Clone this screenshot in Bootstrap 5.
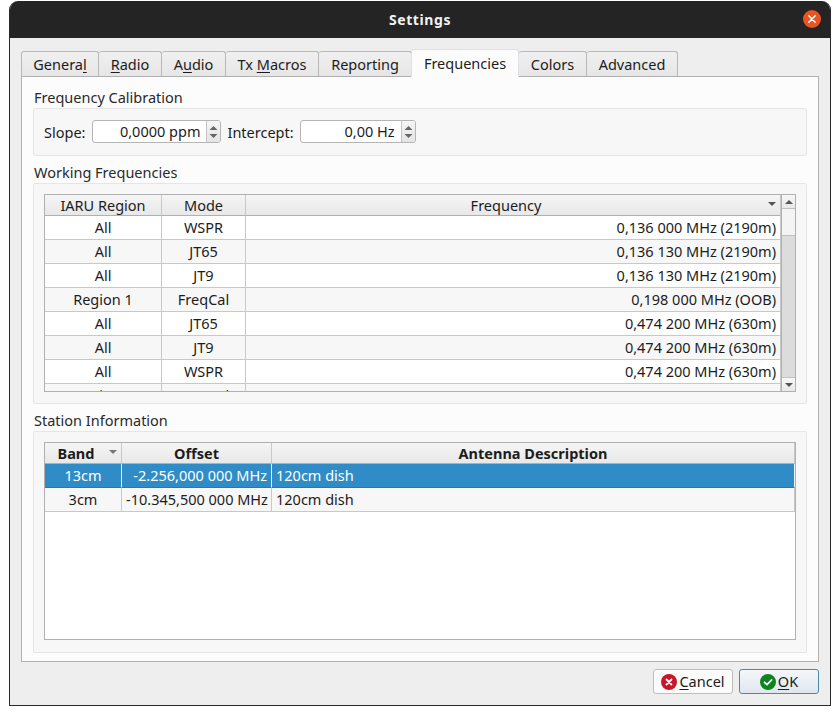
<!DOCTYPE html>
<html lang="en">
<head>
<meta charset="utf-8">
<title>Settings</title>
<link href="https://cdn.jsdelivr.net/npm/bootstrap@5.3.0/dist/css/bootstrap.min.css" rel="stylesheet">
<style>
html,body{background:#fff;margin:0;height:100%}
body{font-family:"Noto Sans","Open Sans",sans-serif;font-size:14.5px;line-height:20px;color:#1c1c1c;overflow:hidden}
.win{width:822px;height:705px;margin:1px 0 0 9px;background:#eee;border:solid #2a2a2a;border-width:0 1px 1px;border-radius:9px 9px 0 0;overflow:hidden;display:flex;flex-direction:column}
.tbar{height:37px;flex:none;background:#242424;color:#f2f2f2;font-weight:700;font-size:14px;letter-spacing:.6px;position:relative;display:flex;align-items:center;justify-content:center}
.xbtn{position:absolute;right:9px;top:9px;width:18px;height:18px}
.tabwrap{padding:11px 11px 0;flex:none;position:relative;z-index:2}
.qtabs{border:0;height:27px;align-items:flex-end;flex-wrap:nowrap}
.qtabs .nav-link{height:25px;padding:0 0 1px;border:1px solid #b8b8b8;border-bottom:0;border-left-width:0;border-radius:3px 3px 0 0;background:linear-gradient(#f0f0f0,#e6e6e6);color:#1c1c1c;display:flex;align-items:center;justify-content:center;margin:0;white-space:pre}
.qtabs .nav-item:first-child .nav-link{border-left-width:1px}
.qtabs .nav-link.active{height:28px;padding:0 0 2px;background:#fcfcfc;color:#1c1c1c;border-left-width:1px;margin:0 0 -1px -1px}
.pane{margin:0 11px;height:586px;flex:none;background:#fcfcfc;border:1px solid #b0b0b0;padding:11px 11px 0}
.gtitle{height:20px;line-height:18px;color:#2a2a2a;padding-left:1px}
.gbox{background:#f7f7f7;border:1px solid #e6e6e6;border-radius:2px;padding:11px 10px}
.g1{height:48px;margin-top:0;display:flex;align-items:center;gap:6px;padding:0 10px 1px}
.g1 .ltxt:first-child{margin-right:1px}
.spin{height:23px;display:flex;background:#fff;border:1px solid #b5b5b5;border-radius:3px;overflow:hidden}
.spinv{flex:1;text-align:right;padding:0 6px 0 0;line-height:21px}
.spinb{width:14px;flex:none;border-left:1px solid #c4c4c4;background:linear-gradient(#f5f5f5,#e4e4e4);display:flex;align-items:center;justify-content:center}
.tv{border:1px solid #b0b0b0;background:#fff;overflow:hidden}
.qt{table-layout:fixed;width:100%;margin:0;border-collapse:separate;border-spacing:0;--bs-table-bg:transparent;color:#1c1c1c}
.qt th,.qt td{padding:1px 4px 0;height:24px;line-height:21px;border:0;border-right:1px solid #c8c8c8;border-bottom:1px solid #c8c8c8;white-space:nowrap;overflow:hidden;box-shadow:none}
.qt th{padding-top:1px;height:21px;line-height:19px;font-weight:400;text-align:center;background:linear-gradient(#f5f5f5,#e8e8e8);border-bottom:1px solid #b0b0b0;position:relative}
.qt th.withsort{padding-right:18px}
.qt tr.alt td{background:#f7f7f7}
.qt tr.sel td{background:#308cc6;color:#fff;border-color:#5aa3d2;border-right-color:#f0f0f0;border-bottom-color:#2a79ab}
.bold th{font-weight:700}
.sarrow{position:absolute;right:4px;top:7px}
.fwrap{display:flex;height:198px}
.fmain{flex:1;min-width:0;height:196px;overflow:hidden}
.vbar{width:14px;flex:none;border-left:1px solid #b0b0b0;background:#dcdcdc;display:flex;flex-direction:column}
.vb{height:14px;flex:none;background:linear-gradient(#f7f7f7,#e8e8e8);display:flex;align-items:center;justify-content:center}
.vb.t{border-bottom:1px solid #c0c0c0}.vb.b{border-top:1px solid #c0c0c0}
.vthumb{height:27px;background:#f4f4f4;border-bottom:1px solid #c0c0c0}
.vtrack{flex:1}
.foot{flex:1;display:flex;justify-content:flex-end;align-items:flex-start;gap:6px;padding:7px 11px 0}
.qbtn{width:80px;height:25px;padding:0;font-size:14.5px;line-height:20px;display:flex;align-items:center;justify-content:center;gap:2px;color:#1c1c1c;border-radius:3px}
.qbtn span{position:relative;top:-1px}
.qb1{background:#fbfbfb;border:1px solid #bdbdbd}
.qb2{background:linear-gradient(#f4f7f9,#dfe7ee);border:1px solid #4f87ab}
.ltxt{white-space:nowrap}
u{text-underline-offset:2px}
</style>
</head>
<body>
<div class="win">
  <div class="tbar">Settings
    <svg class="xbtn" viewBox="0 0 18 18"><circle cx="9" cy="9" r="9" fill="#e95420"/><path d="M5.8 5.8l6.4 6.4M12.2 5.8l-6.4 6.4" stroke="#fff" stroke-width="1.5" stroke-linecap="round"/></svg>
  </div>
  <div class="tabwrap">
    <ul class="nav nav-tabs qtabs">
      <li class="nav-item" style="width:78px"><a class="nav-link" href="#"><span>Genera<u>l</u></span></a></li>
      <li class="nav-item" style="width:63px"><a class="nav-link" href="#"><span><u>R</u>adio</span></a></li>
      <li class="nav-item" style="width:64px"><a class="nav-link" href="#"><span>A<u>u</u>dio</span></a></li>
      <li class="nav-item" style="width:93px"><a class="nav-link" href="#"><span>Tx <u>M</u>acros</span></a></li>
      <li class="nav-item" style="width:93px"><a class="nav-link" href="#"><span>Reportin<u>g</u></span></a></li>
      <li class="nav-item" style="width:107px"><a class="nav-link active" href="#">Frequencies</a></li>
      <li class="nav-item" style="width:68px"><a class="nav-link" href="#">Colors</a></li>
      <li class="nav-item" style="width:91px"><a class="nav-link" href="#">Advanced</a></li>
    </ul>
  </div>
  <div class="pane">
    <div class="gtitle">Frequency Calibration</div>
    <div class="gbox g1">
      <span class="ltxt">Slope:</span>
      <div class="spin" style="width:129px"><div class="spinv">0,0000 ppm</div><div class="spinb"><svg width="9" height="12" viewBox="0 0 9 12"><path d="M4.5 0L8.5 4H.5zM4.5 12L.5 8h8z" fill="#666"/></svg></div></div>
      <span class="ltxt">Intercept:</span>
      <div class="spin" style="width:116px"><div class="spinv">0,00 Hz</div><div class="spinb"><svg width="9" height="12" viewBox="0 0 9 12"><path d="M4.5 0L8.5 4H.5zM4.5 12L.5 8h8z" fill="#666"/></svg></div></div>
    </div>
    <div class="gtitle" style="margin-top:7px">Working Frequencies</div>
    <div class="gbox" style="height:221px;padding:10px 10px">
      <div class="tv fwrap">
        <div class="fmain">
          <table class="table qt">
            <colgroup><col style="width:117px"><col style="width:84px"><col></colgroup>
            <thead><tr><th>IARU Region</th><th>Mode</th><th class="withsort">Frequency<svg class="sarrow" width="8" height="4" viewBox="0 0 8 4"><path d="M0 0h8L4 4z" fill="#555"/></svg></th></tr></thead>
            <tbody>
              <tr><td class="text-center">All</td><td class="text-center">WSPR</td><td class="text-end">0,136 000 MHz (2190m)</td></tr>
              <tr class="alt"><td class="text-center">All</td><td class="text-center">JT65</td><td class="text-end">0,136 130 MHz (2190m)</td></tr>
              <tr><td class="text-center">All</td><td class="text-center">JT9</td><td class="text-end">0,136 130 MHz (2190m)</td></tr>
              <tr class="alt"><td class="text-center">Region 1</td><td class="text-center">FreqCal</td><td class="text-end">0,198 000 MHz (OOB)</td></tr>
              <tr><td class="text-center">All</td><td class="text-center">JT65</td><td class="text-end">0,474 200 MHz (630m)</td></tr>
              <tr class="alt"><td class="text-center">All</td><td class="text-center">JT9</td><td class="text-end">0,474 200 MHz (630m)</td></tr>
              <tr><td class="text-center">All</td><td class="text-center">WSPR</td><td class="text-end">0,474 200 MHz (630m)</td></tr>
              <tr class="alt"><td class="text-center">Region 1</td><td class="text-center">FreqCal</td><td class="text-end">0,474 200 MHz (630m)</td></tr>
            </tbody>
          </table>
        </div>
        <div class="vbar">
          <div class="vb t"><svg width="8" height="4" viewBox="0 0 8 4"><path d="M4 0l4 4H0z" fill="#555"/></svg></div>
          <div class="vthumb"></div>
          <div class="vtrack"></div>
          <div class="vb b"><svg width="8" height="4" viewBox="0 0 8 4"><path d="M0 0h8L4 4z" fill="#555"/></svg></div>
        </div>
      </div>
    </div>
    <div class="gtitle" style="margin-top:7px">Station Information</div>
    <div class="gbox" style="height:222px;padding:10px 10px">
      <div class="tv" style="height:198px">
        <table class="table qt bold">
          <colgroup><col style="width:77px"><col style="width:150px"><col></colgroup>
          <thead><tr><th class="withsort">Band<svg class="sarrow" width="8" height="4" viewBox="0 0 8 4"><path d="M0 0h8L4 4z" fill="#777"/></svg></th><th>Offset</th><th>Antenna Description</th></tr></thead>
          <tbody>
            <tr class="sel"><td class="text-center">13cm</td><td class="text-end">-2.256,000 000 MHz</td><td>120cm dish</td></tr>
            <tr class="alt"><td class="text-center">3cm</td><td class="text-end">-10.345,500 000 MHz</td><td>120cm dish</td></tr>
          </tbody>
        </table>
      </div>
    </div>
  </div>
  <div class="foot">
    <button type="button" class="btn qbtn qb1"><svg width="16" height="16" viewBox="0 0 16 16"><circle cx="8" cy="8" r="8" fill="#c7162b"/><path d="M5.5 5.5l5 5M10.500 5.500l-5 5" stroke="#fff" stroke-width="1.8" stroke-linecap="round"/></svg><span><u>C</u>ancel</span></button>
    <button type="button" class="btn qbtn qb2"><svg width="16" height="16" viewBox="0 0 16 16"><circle cx="8" cy="8" r="8" fill="#0e8420"/><path d="M4.500 8.300l2.500 2.400L11.500 6" fill="none" stroke="#fff" stroke-width="1.8" stroke-linecap="round" stroke-linejoin="round"/></svg><span><u>O</u>K</span></button>
  </div>
</div>
<script src="https://cdn.jsdelivr.net/npm/bootstrap@5.3.0/dist/js/bootstrap.bundle.min.js"></script>
</body>
</html>
